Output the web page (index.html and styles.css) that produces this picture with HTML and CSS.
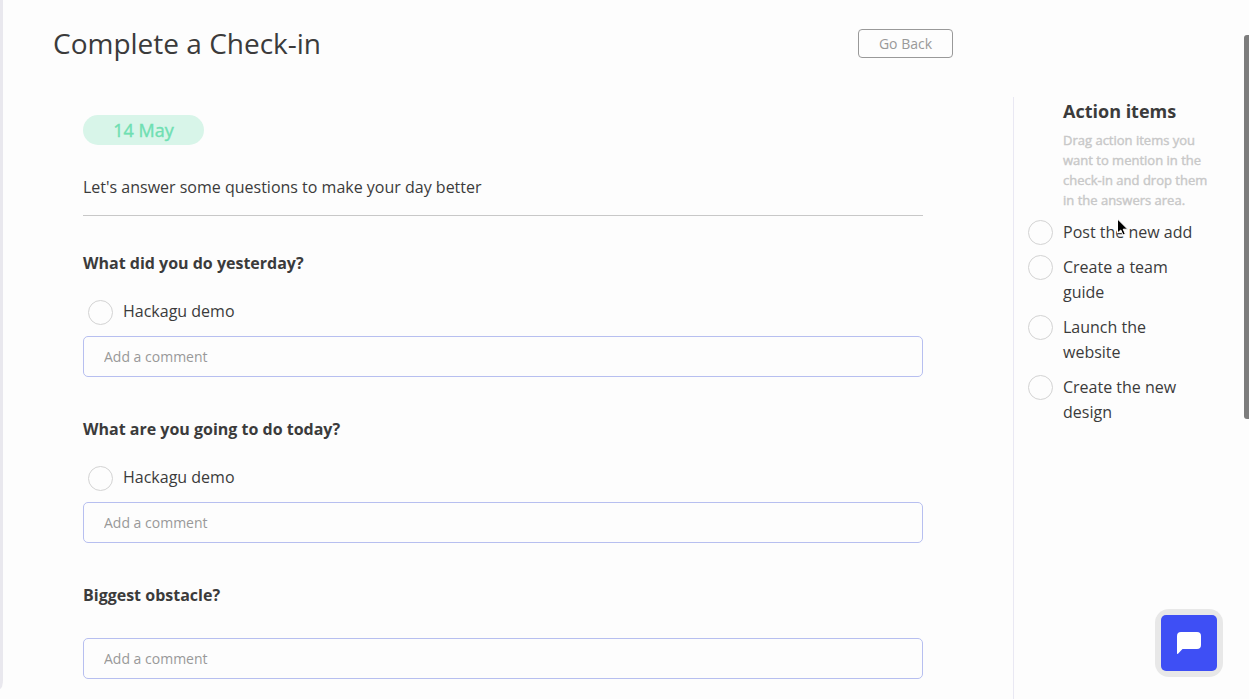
FILE: index.html
```html
<!DOCTYPE html>
<html lang="en">
<head>
<meta charset="utf-8">
<title>Complete a Check-in</title>
<link rel="stylesheet" href="styles.css">
</head>
<body>
<div class="app">
  <div class="edge"></div>
  <div class="page">
    <header class="header">
      <h1 class="title">Complete a Check-in</h1>
      <button class="back">Go Back</button>
    </header>
    <div class="body">
      <main class="checkin">
        <div class="date">14 May</div>
        <p class="intro">Let's answer some questions to make your day better</p>
        <section class="question">
          <h2 class="question-title">What did you do yesterday?</h2>
          <div class="answer"><span class="circle"></span><span class="answer-text">Hackagu demo</span></div>
          <input class="comment" placeholder="Add a comment">
        </section>
        <section class="question">
          <h2 class="question-title">What are you going to do today?</h2>
          <div class="answer"><span class="circle"></span><span class="answer-text">Hackagu demo</span></div>
          <input class="comment" placeholder="Add a comment">
        </section>
        <section class="question">
          <h2 class="question-title">Biggest obstacle?</h2>
          <input class="comment comment-only" placeholder="Add a comment">
        </section>
      </main>
      <aside class="actions">
        <h2 class="actions-title">Action items</h2>
        <p class="hint">Drag action items you<br>want to mention in the<br>check-in and drop them<br>in the answers area.</p>
        <ul class="list">
          <li class="item"><span class="circle"></span><span>Post the new add</span></li>
          <li class="item"><span class="circle"></span><span>Create a team<br>guide</span></li>
          <li class="item"><span class="circle"></span><span>Launch the<br>website</span></li>
          <li class="item"><span class="circle"></span><span>Create the new<br>design</span></li>
        </ul>
      </aside>
    </div>
  </div>
  <div class="scrollbar"></div>
  <button class="chat" aria-label="Chat">
    <svg width="24" height="22" viewBox="0 0 24 22"><path fill="#fff" d="M4 0H20Q24 0 24 4V13Q24 17 20 17H5.500L1 21.700Q0 22.300 0 21V4Q0 0 4 0Z"/></svg>
  </button>
  <svg class="cursor" width="14" height="20" viewBox="0 0 14 20"><path d="M1.500 1V15L4.800 12L7 17L9.300 16L7.200 11.200H11.700Z" fill="#000" stroke="#fff" stroke-width="1"/></svg>
</div>
</body>
</html>
```

FILE: styles.css
```css
* { box-sizing: border-box; }
body {
  margin: 0;
  background: #fdfdfd;
  color: #3b3b3b;
  font: 16px/25px "Open Sans", sans-serif;
}
h1, h2, p, ul { margin: 0; padding: 0; }
.app {
  position: relative;
  display: flex;
  height: 699px;
  overflow: hidden;
}
.edge {
  width: 3px;
  height: 689px;
  background: #e9e8ee;
  border-bottom-right-radius: 3px 9px;
}
.page { width: 1241px; }
.header {
  display: flex;
  justify-content: space-between;
  align-items: center;
  width: 950px;
  height: 97px;
  padding: 0 0 10px 50px;
}
.title {
  padding-bottom: 2px;
  font-size: 28px;
  font-weight: 400;
  line-height: 38px;
}
.back {
  width: 95px;
  height: 29px;
  border: 1px solid #999;
  border-radius: 4px;
  background: transparent;
  color: #999;
  font: 14px/19px "Open Sans", sans-serif;
  padding: 0;
}
.body { display: flex; height: 602px; }
.checkin { width: 1010px; padding: 18px 90px 0 80px; }
.date {
  width: 121px;
  height: 30px;
  border-radius: 15px;
  background: #d8f5e9;
  color: #6fdfb2;
  font-size: 18px;
  line-height: 31px;
  text-align: center;
  -webkit-text-stroke: 0.4px;
}
.intro {
  padding: 30px 0 15px;
  border-bottom: 1px solid #c8c8c8;
}
.question { padding-top: 35px; }
.question + .question { padding-top: 40px; }
.question-title { font-size: 16px; font-weight: 700; line-height: 25px; }
.answer {
  display: flex;
  gap: 10px;
  padding: 24px 0 11px 5px;
}
.answer-text { margin-top: -1px; line-height: 25px; height: 25px; }
.circle {
  flex: none;
  width: 25px;
  height: 25px;
  border: 1px solid #d3d3d3;
  border-radius: 50%;
}
.comment {
  display: block;
  width: 840px;
  height: 41px;
  padding: 0 20px;
  border: 1px solid #b7bff0;
  border-radius: 5px;
  background: transparent;
  font: 14px "Open Sans", sans-serif;
}
.comment::placeholder { color: #999; opacity: 1; }
.comment-only { margin-top: 30px; }
.actions {
  flex: 1;
  border-left: 1px solid #e9e8f3;
}
.actions-title {
  padding: 2px 0 0 49px;
  font-size: 18px;
  font-weight: 700;
  line-height: 25px;
}
.hint {
  padding: 6px 0 0 49px;
  color: #c8c8c8;
  font-size: 13px;
  line-height: 20px;
  -webkit-text-stroke: 0.4px;
}
.list {
  display: grid;
  gap: 10px;
  padding: 10px 0 0 14px;
  list-style: none;
}
.item { display: flex; gap: 10px; }
.scrollbar {
  width: 5px;
  height: 384px;
  margin-top: 35px;
  border-radius: 3px 0 0 3px;
  background: #7d7d7d;
}
.chat {
  position: absolute;
  left: 1161px;
  top: 615px;
  display: grid;
  place-items: center;
  width: 56px;
  height: 56px;
  padding: 0;
  border: 0;
  border-radius: 5px;
  background: #3e4ff5;
}
.chat::before {
  content: "";
  position: absolute;
  inset: -6px;
  z-index: -1;
  border-radius: 14px;
  background: #e8e8e8;
}
.chat svg { display: block; }
.cursor { position: absolute; left: 1116px; top: 218px; }
```
